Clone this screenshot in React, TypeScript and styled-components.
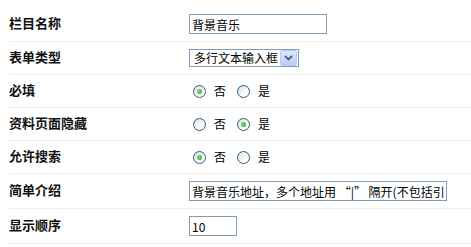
import styled, { createGlobalStyle } from "styled-components";

const GlobalStyle = createGlobalStyle`
  html, body {
    margin: 0;
    padding: 0;
    background: #ffffff;
  }

  body {
    font-family: "Noto Sans CJK SC", "Liberation Sans", sans-serif;
    font-size: 12px;
    color: #000000;
  }
`;

interface RadioProps {
  checked: boolean;
}

const Radio = ({ checked }: RadioProps) => (
  <S.RadioCircle>{checked && <S.RadioDot />}</S.RadioCircle>
);

interface YesNoProps {
  value: "yes" | "no";
}

const YesNo = ({ value }: YesNoProps) => (
  <S.RadioGroup>
    <S.RadioLabel>
      <Radio checked={value === "no"} />
      <span>否</span>
    </S.RadioLabel>
    <S.RadioLabel>
      <Radio checked={value === "yes"} />
      <span>是</span>
    </S.RadioLabel>
  </S.RadioGroup>
);

const App = () => {
  return (
    <>
      <GlobalStyle />
      <S.Form>
        <S.Row>
          <S.Label>栏目名称</S.Label>
          <S.TextInput $width={138} defaultValue="背景音乐" />
        </S.Row>
        <S.Row>
          <S.Label>表单类型</S.Label>
          <S.Select>
            <S.SelectText>多行文本输入框</S.SelectText>
            <S.SelectButton>
              <svg width="9" height="6" viewBox="0 0 9 6">
                <path d="M1 1 L4.5 4.5 L8 1" fill="none" stroke="#4d6185" strokeWidth="1.8" />
              </svg>
            </S.SelectButton>
          </S.Select>
        </S.Row>
        <S.Row>
          <S.Label>必填</S.Label>
          <YesNo value="no" />
        </S.Row>
        <S.Row>
          <S.Label>资料页面隐藏</S.Label>
          <YesNo value="yes" />
        </S.Row>
        <S.Row>
          <S.Label>允许搜索</S.Label>
          <YesNo value="no" />
        </S.Row>
        <S.Row>
          <S.Label>简单介绍</S.Label>
          <S.TextInput $width={258} defaultValue="背景音乐地址，多个地址用 “|” 隔开(不包括引号)" />
        </S.Row>
        <S.Row>
          <S.Label>显示顺序</S.Label>
          <S.TextInput $width={48} defaultValue="10" />
        </S.Row>
      </S.Form>
    </>
  );
};

export default App;

const S = {
  Form: styled.div`
    padding: 7px 0 0 9px;
  `,

  Row: styled.div`
    display: grid;
    grid-template-columns: 180px 1fr;
    align-items: center;
    padding: 7px 0;
    border-bottom: 1px solid #ededed;
  `,

  Label: styled.div`
    font-weight: bold;
    font-size: 13px;
    line-height: 16px;
    margin-top: -2px;
    color: #111111;
  `,

  TextInput: styled.input<{ $width: number }>`
    box-sizing: border-box;
    width: ${(p) => p.$width}px;
    height: 20px;
    margin: 0;
    padding: 0 2px;
    border: 1px solid #7f9db9;
    font-family: "Noto Sans CJK SC", "Liberation Sans", sans-serif;
    font-size: 12px;
    color: #000000;
    background: #ffffff;
    outline: none;
  `,

  Select: styled.div`
    box-sizing: border-box;
    display: flex;
    align-items: center;
    justify-content: space-between;
    width: 110px;
    height: 18px;
    padding: 0 1px 0 4px;
    border: 1px solid #7f9db9;
    background: #ffffff;
  `,

  SelectText: styled.span`
    font-size: 12px;
    line-height: 16px;
    white-space: nowrap;
  `,

  SelectButton: styled.span`
    display: flex;
    align-items: center;
    justify-content: center;
    width: 15px;
    height: 14px;
    border: 1px solid #b5c8f4;
    border-radius: 2px;
    background: linear-gradient(#dce6fd, #b9cdf9);
  `,

  RadioGroup: styled.div`
    display: flex;
    align-items: center;
    gap: 11px;
    height: 18px;
    padding-left: 4px;
  `,

  RadioLabel: styled.label`
    display: flex;
    align-items: center;
    gap: 8px;
    font-size: 12px;
    line-height: 16px;
  `,

  RadioCircle: styled.span`
    box-sizing: border-box;
    display: flex;
    align-items: center;
    justify-content: center;
    width: 13px;
    height: 13px;
    border: 1px solid #2c5a87;
    border-radius: 50%;
    background: linear-gradient(135deg, #dcdcd4, #ffffff 70%);
  `,

  RadioDot: styled.span`
    width: 5px;
    height: 5px;
    border-radius: 50%;
    background: radial-gradient(circle at 40% 40%, #7ee07e, #1ea21e);
  `,
};
